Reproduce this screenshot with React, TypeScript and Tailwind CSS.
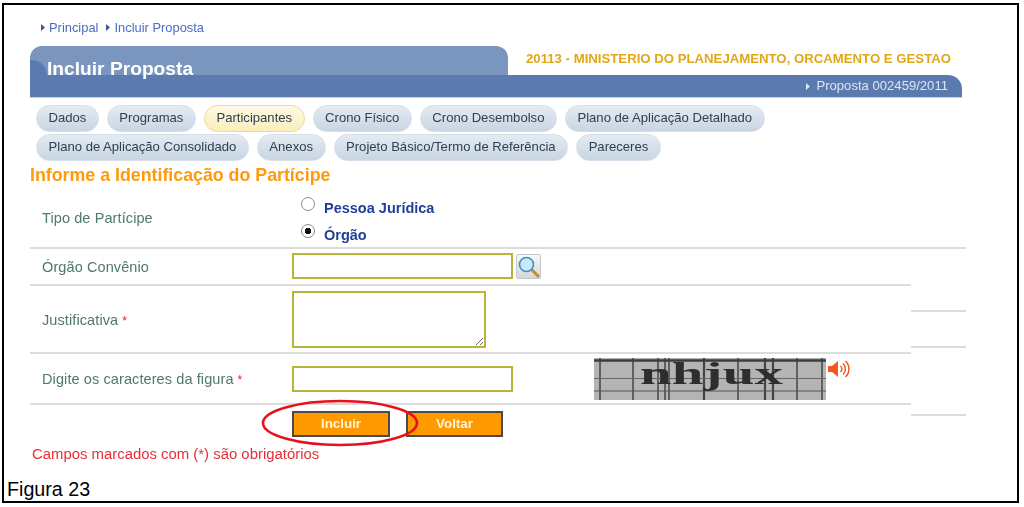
const rowOne = ["Dados", "Programas", "Participantes", "Crono Físico", "Crono Desembolso", "Plano de Aplicação Detalhado"];
const rowTwo = ["Plano de Aplicação Consolidado", "Anexos", "Projeto Básico/Termo de Referência", "Pareceres"];

function Arrow({ className }: { className: string }) {
  return (
    <svg width="4" height="7" viewBox="0 0 4 7" className={className}>
      <polygon points="0,0 4,3.5 0,7" fill="currentColor" />
    </svg>
  );
}

function Pill({ label }: { label: string }) {
  const active = label === "Participantes";
  return (
    <span
      className={
        active
          ? "flex h-[27px] items-center rounded-[14px] border border-[#f0d98a] bg-gradient-to-b from-[#fdf9e4] to-[#fbeebc] px-[11.5px] pb-[2px] text-[13.1px] text-[#2f4052]"
          : "flex h-[27px] items-center rounded-[14px] border border-[#d5dfe9] bg-gradient-to-b from-[#e4ebf2] to-[#c8d5e3] px-[11.5px] pb-[2px] text-[13.1px] text-[#2f4052]"
      }
    >
      {label}
    </span>
  );
}

function Required() {
  return <span className="ml-[4px] text-[12px] text-[#e8202a]">*</span>;
}

function Captcha() {
  const verticals = [6, 39, 64, 71, 75, 110, 144, 171, 179, 203, 228];
  return (
    <svg width="232" height="42" viewBox="0 0 232 42" className="ml-[81px]">
      <rect width="232" height="42" fill="#b4b4b4" />
      {verticals.map((x) => (
        <line key={x} x1={x} y1="0" x2={x} y2="42" stroke="#444" strokeWidth={x === 110 || x === 171 || x === 179 ? 2.2 : 1.5} />
      ))}
      <line x1="0" y1="2.5" x2="232" y2="2.5" stroke="#3c3c3c" strokeWidth="2.6" />
      <line x1="0" y1="20.5" x2="232" y2="20.5" stroke="#666" strokeWidth="1" />
      <line x1="0" y1="33" x2="232" y2="33" stroke="#555" strokeWidth="1" />
      <text
        x="46"
        y="26"
        fontSize="31"
        fontWeight="700"
        fill="#2e2e2e"
        textLength="143"
        lengthAdjust="spacingAndGlyphs"
        fontFamily="'Liberation Serif', serif"
      >
        nhjux
      </text>
    </svg>
  );
}

function Speaker() {
  return (
    <svg width="23" height="20" viewBox="0 0 23 20" className="mb-[20px] ml-[2px]" fill="none">
      <polygon points="0,7 4,7 10,2 10,18 4,13 0,13" fill="#f4581f" />
      <path d="M12.5 7a4 4 0 0 1 0 6M15 4.5a7.5 7.5 0 0 1 0 11M17.5 2a11 11 0 0 1 0 16" stroke="#f4581f" strokeWidth="1.5" />
    </svg>
  );
}

function SearchIcon() {
  return (
    <span className="ml-[3px] flex h-[25px] w-[25px] items-center justify-center rounded-[2px] border border-[#c4c8c8] bg-gradient-to-b from-[#f8f9f9] to-[#d4d8d8]">
      <svg width="23" height="23" viewBox="0 0 23 23" fill="none">
        <line x1="15" y1="15" x2="21" y2="21" stroke="#c98a2e" strokeWidth="3" strokeLinecap="round" />
        <circle cx="9.5" cy="9.5" r="7" fill="#c9e9f9" stroke="#3f8fc4" strokeWidth="1.6" />
      </svg>
    </span>
  );
}

const radioClass =
  "m-0 mb-[10px] h-[14px] w-[14px] appearance-none rounded-full border border-[#8a8a8a] bg-white checked:bg-[radial-gradient(circle,#111_0_3px,#fff_3.5px)]";

export default function App() {
  return (
    <div className="h-[507px] w-[1024px] bg-white pl-[2px] pt-[3px] font-['Liberation_Sans',Arial,sans-serif]">
      <div className="flex h-[500px] w-[1017px] flex-col border-2 border-black">
        <div className="pl-[26px] blur-[0.4px]">
          {/* Breadcrumb */}
          <div className="flex h-[41px] items-center pl-[11px] pt-[4px] text-[12.9px] leading-[14px] text-[#4a6cc4]">
            <Arrow className="mr-[4px] text-[#3d5a94]" />
            <span>Principal</span>
            <Arrow className="ml-[8px] mr-[4px] text-[#3d5a94]" />
            <span>Incluir Proposta</span>
          </div>

          {/* Header */}
          <div className="w-[932px]">
            <div className="flex h-[29px]">
              <div className="relative h-[29px] w-[478px] rounded-t-[12px] bg-[#7a96bf] pl-[17px] pt-[13px] text-[19.2px] font-bold leading-[20px] text-white">
                <div className="absolute bottom-0 left-0 h-[15px] w-[17px] rounded-tr-[17px] bg-[#5b7ab0]" />
                <span className="relative">Incluir Proposta</span>
              </div>
              <div className="ml-[18px] pt-[5px] text-[13.2px] font-bold leading-[15px] text-[#e2a718]">
                20113 - MINISTERIO DO PLANEJAMENTO, ORCAMENTO E GESTAO
              </div>
            </div>
            <div className="flex h-[23px] items-center justify-end rounded-tr-[14px] border-b border-[#c5d3e4] bg-[#5b7ab0] pr-[14px] text-[13.1px] text-[#dde5f0]">
              <Arrow className="mr-[6px]" />
              <span>Proposta 002459/2011</span>
            </div>
          </div>

          {/* Tabs */}
          <div className="ml-[6px] mt-[7px] flex flex-col gap-[2px]">
            <div className="flex gap-[8px]">
              {rowOne.map((t) => (
                <Pill key={t} label={t} />
              ))}
            </div>
            <div className="flex gap-[8px]">
              {rowTwo.map((t) => (
                <Pill key={t} label={t} />
              ))}
            </div>
          </div>

          <h2 className="mb-[8px] mt-[4px] text-[17.8px] font-bold leading-[20px] text-[#ff9a0a]">Informe a Identificação do Partícipe</h2>

          {/* Form */}
          <div className="w-[936px] text-[14.5px] tracking-[0.1px] text-[#4f7a68]">
            <div className="flex h-[56px] items-center border-b-2 border-[#dcdcdc]">
              <div className="w-[262px] pb-[3px] pl-[12px]">Tipo de Partícipe</div>
              <div className="ml-[9px] flex flex-col gap-[13px] pt-[4px] text-[14.5px] font-bold tracking-normal text-[#1f3f98]">
                <label className="flex h-[14px] items-center gap-[9px]">
                  <input type="radio" name="tipo" className={radioClass} />
                  Pessoa Jurídica
                </label>
                <label className="flex h-[14px] items-center gap-[9px]">
                  <input type="radio" name="tipo" defaultChecked className={radioClass} />
                  Órgão
                </label>
              </div>
            </div>

            <div className="flex">
              <div className="w-[881px]">
                <div className="flex h-[37px] items-center border-b-2 border-[#dcdcdc]">
                  <div className="w-[262px] pl-[12px] pt-[3px]">Órgão Convênio</div>
                  <input className="mb-[2px] h-[26px] w-[221px] border-2 border-[#b5b53c] bg-white" />
                  <SearchIcon />
                </div>
                <div className="flex h-[68px] items-center border-b-2 border-[#dcdcdc]">
                  <div className="w-[262px] pl-[12px] pt-[3px]">
                    Justificativa
                    <Required />
                  </div>
                  <textarea className="h-[57px] w-[194px] border-2 border-[#b5b53c] bg-white" />
                </div>
                <div className="flex h-[51px] items-center border-b-2 border-[#dcdcdc]">
                  <div className="w-[262px] pl-[12px] pt-[3px]">
                    Digite os caracteres da figura
                    <Required />
                  </div>
                  <input className="h-[26px] w-[221px] border-2 border-[#b5b53c] bg-white" />
                  <Captcha />
                  <Speaker />
                </div>
                <div className="relative flex gap-[16px] pl-[262px] pt-[6px]">
                  <button className="h-[26px] w-[98px] border-2 border-[#4a4a4a] bg-[#ff9900] text-[13.4px] font-bold tracking-normal text-[#fff3dc]">Incluir</button>
                  <button className="h-[26px] w-[97px] border-2 border-[#4a4a4a] bg-[#ff9900] text-[13.4px] font-bold tracking-normal text-[#fff3dc]">Voltar</button>
                  <svg width="160" height="50" viewBox="0 0 160 50" fill="none" className="absolute left-[230px] top-[-7px]">
                    <ellipse cx="80" cy="25" rx="77" ry="22" stroke="#e8101c" strokeWidth="2.6" />
                  </svg>
                </div>
              </div>
              <div className="w-[55px]">
                <div className="h-[63px] border-b-2 border-[#dcdcdc]" />
                <div className="h-[36px] border-b-2 border-[#dcdcdc]" />
                <div className="h-[68px] border-b-2 border-[#dcdcdc]" />
              </div>
            </div>
          </div>

          <p className="ml-[2px] mt-[9px] text-[14.9px] leading-[16px] text-[#e63038]">Campos marcados com (*) são obrigatórios</p>
        </div>

        <div className="mt-auto pb-[1px] pl-[3px] text-[19.7px] leading-[22px] text-black">Figura 23</div>
      </div>
    </div>
  );
}
